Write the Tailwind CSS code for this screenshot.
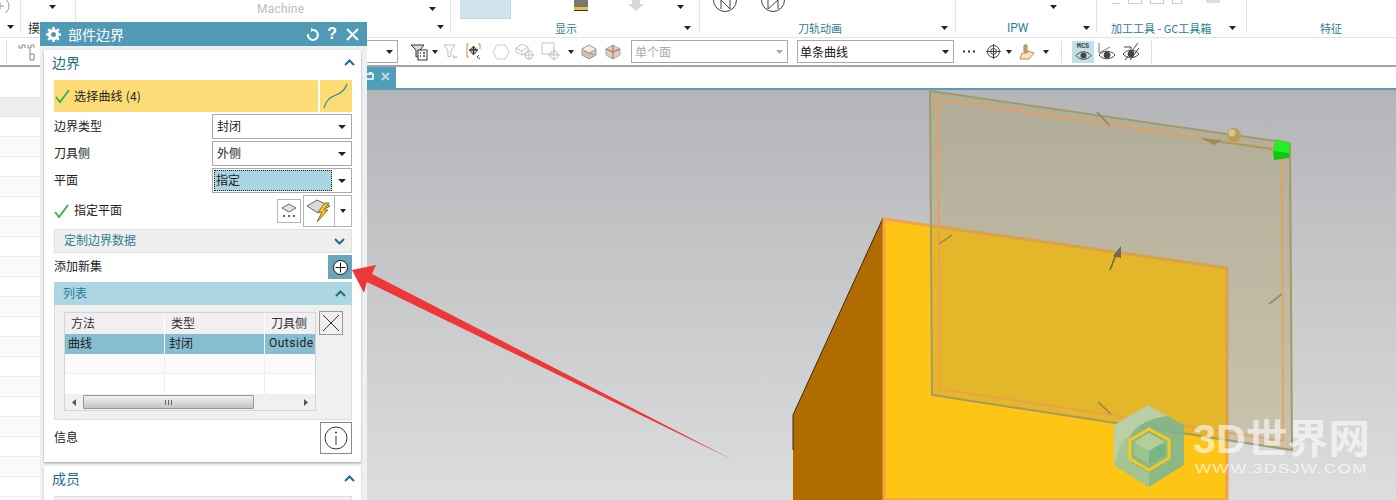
<!DOCTYPE html>
<html lang="zh-CN">
<head>
    <meta charset="UTF-8">
    <title>部件边界</title>
    <script src="https://cdn.jsdelivr.net/npm/@tailwindcss/browser@4"></script>
</head>
<body class="bg-white font-['Noto_Sans_CJK_SC','Noto_Sans',sans-serif] text-xs text-[#222]">
<div class="relative w-[1396px] h-[500px] overflow-hidden">

    <!-- ribbon -->
    <div class="flex h-[38px] border-b border-[#e3e3e3] text-[#2b7e96] text-[11px]">
        <div class="w-[21px] h-[32px] border-r border-[#e4e4e4] flex flex-col justify-between">
            <svg width="11" height="13" viewBox="0 0 11 13" fill="none" stroke="#999"><circle cx="0" cy="6" r="9"/><path d="M-3 6h7M0 2v8"/></svg>
            <svg class="ml-[7px] mb-[3px]" width="7" height="4"><path d="M0 0h7L3.5 4z" fill="#222"/></svg>
        </div>
        <div class="w-[55px] h-[32px] border-r border-[#e4e4e4] flex flex-col justify-between pl-[7px]">
            <svg class="ml-[21px] mt-[5px]" width="7" height="4"><path d="M0 0h7L3.5 4z" fill="#222"/></svg>
            <span class="text-[#333] text-xs leading-[18px] -mb-[5px]">摸</span>
        </div>
        <div class="w-[375px] h-[32px] border-r border-[#e4e4e4] flex flex-col justify-between">
            <div class="flex items-center h-[17px]">
                <span class="ml-[181px] text-[#bbb] text-xs font-['Roboto'] tracking-[0.2px]">Machine</span>
                <svg class="ml-[125px]" width="7" height="4"><path d="M0 0h7L3.5 4z" fill="#222"/></svg>
            </div>
            <svg class="ml-[361px] mb-[3px]" width="7" height="4"><path d="M0 0h7L3.5 4z" fill="#222"/></svg>
        </div>
        <div class="w-[249px] h-[32px] border-r border-[#e4e4e4] flex">
            <div class="flex flex-col">
                <div class="flex h-[19px] shrink-0 items-start">
                    <div class="ml-[9px] w-[51px] h-[19px] bg-[#cfe4ec] border-r border-b border-[#c0d8e2]"></div>
                    <svg class="ml-[63px]" width="14" height="11" viewBox="0 0 14 11"><rect width="14" height="7" fill="#777"/><rect y="7" width="14" height="3" fill="#e8c33a"/><rect y="10" width="14" height="1" fill="#333"/></svg>
                    <svg class="ml-[40px]" width="16" height="11" viewBox="0 0 16 11"><path d="M4 0h8v4h4L8 11 0 4h4z" fill="#d8d8d8"/></svg>
                    <svg class="ml-[33px] mt-[5px]" width="7" height="4"><path d="M0 0h7L3.5 4z" fill="#222"/></svg>
                </div>
                <div class="flex h-[18px] shrink-0 items-center">
                    <span class="ml-[104px]">显示</span>
                    <svg class="ml-[107px]" width="7" height="4"><path d="M0 0h7L3.5 4z" fill="#222"/></svg>
                </div>
            </div>
        </div>
        <div class="w-[256px] h-[32px] border-r border-[#e4e4e4] flex flex-col">
            <div class="flex h-[19px] shrink-0 items-start">
                <svg class="ml-[12px]" width="26" height="12" viewBox="0 0 26 12" fill="none" stroke="#444"><circle cx="13" cy="0" r="11.5"/><path d="M9 0v9M18 0v9L9 0"/></svg>
                <svg class="ml-[22px]" width="26" height="12" viewBox="0 0 26 12" fill="none" stroke="#444"><circle cx="13" cy="0" r="11.5"/><path d="M18 0v9M8 0v9L18 0"/></svg>
            </div>
            <div class="flex h-[18px] shrink-0 items-center">
                <span class="ml-[98px]">刀轨动画</span>
                <svg class="ml-[99px]" width="7" height="4"><path d="M0 0h7L3.5 4z" fill="#222"/></svg>
            </div>
        </div>
        <div class="w-[141px] h-[32px] border-r border-[#e4e4e4] flex flex-col">
            <svg class="ml-[94px] mt-[5px] shrink-0" width="7" height="4"><path d="M0 0h7L3.5 4z" fill="#222"/></svg>
            <div class="flex items-center mt-[10px] h-[18px] shrink-0">
                <span class="ml-[51px] text-xs font-['Roboto']">IPW</span>
                <svg class="ml-[55px]" width="7" height="4"><path d="M0 0h7L3.5 4z" fill="#222"/></svg>
            </div>
        </div>
        <div class="w-[150px] h-[32px] border-r border-[#e4e4e4] flex flex-col">
            <div class="h-[19px] shrink-0 flex gap-[8px] pl-[15px]">
                <div class="w-[8px] h-[4px] border-b border-[#ccc]"></div>
                <div class="w-[14px] h-[4px] border border-t-0 border-[#ccc]"></div>
                <div class="w-[14px] h-[4px] border border-t-0 border-[#ccc]"></div>
                <div class="w-[10px] h-[4px] border border-t-0 border-[#ccc]"></div>
                <div class="ml-[16px] w-[14px] h-[3px] bg-[#ddd]"></div>
            </div>
            <div class="flex items-center h-[18px] shrink-0">
                <span class="ml-[14px] whitespace-nowrap">加工工具 - GC工具箱</span>
                <svg class="ml-[18px]" width="7" height="4"><path d="M0 0h7L3.5 4z" fill="#222"/></svg>
            </div>
        </div>
        <div class="flex-1 h-[37px] flex items-end">
            <span class="ml-[73px] leading-[18px]">特征</span>
        </div>
    </div>

    <!-- toolbar -->
    <div class="flex items-center h-[29px] border-b-2 border-[#a3a3a3]">
        <div class="w-[7px] h-[22px] border-r border-[#ddd]"></div>
        <svg class="ml-[11px]" width="18" height="22" viewBox="0 0 18 22" fill="none" stroke="#888"><path d="M1 4v3h3V4h3v3M10 4v3h3V4h3v3M12 8v5h4v6h-4v-6"/></svg>
        <!-- filter select, mostly under the dialog -->
        <div class="ml-[15px] w-[347px] h-[23px] border border-[#a9a9a9] flex items-center justify-end pr-[4px]">
            <svg width="7" height="4"><path d="M0 0h7L3.5 4z" fill="#222"/></svg>
        </div>
        <svg class="ml-[12px]" width="18" height="18" viewBox="0 0 18 18" fill="none" stroke="#333"><path d="M1 2h13l-4 5v5l-4 2V7z" fill="#ddd"/><rect x="8" y="7" width="9" height="10" fill="#fff"/><path d="M10 10h1M13 10h2M10 13h1M13 13h2" stroke-width="1.5"/></svg>
        <svg class="ml-[4px]" width="6" height="4"><path d="M0 0h6L3 4z" fill="#222"/></svg>
        <svg class="ml-[5px]" width="16" height="16" viewBox="0 0 16 16" fill="none" stroke="#bbb"><path d="M1 1h11L8 7v5l-3 1V7zM11 11l-1 2 2 1M10 13h4v1"/></svg>
        <svg class="ml-[7px]" width="18" height="18" viewBox="0 0 18 18" fill="none"><path d="M3 1H1v13h2M12 1h2v5" stroke="#d08a3a"/><path d="M3 7h9M7.500 3v9" stroke="#333" stroke-width="1.500"/><circle cx="7.500" cy="7.500" r="3" stroke="#333"/><path d="M13 12l-2 2 3 2" stroke="#555"/></svg>
        <svg class="ml-[8px]" width="18" height="16" viewBox="0 0 18 16" fill="none" stroke="#ccc"><path d="M5 1h8l4 7-4 7H5L1 8z"/></svg>
        <svg class="ml-[5px]" width="20" height="18" viewBox="0 0 20 18" fill="none" stroke="#c4c4c4"><path d="M1 5l6-4 6 3v5l-6 3-6-3zM1 5l6 3 6-4M7 8v4"/><circle cx="14" cy="12" r="4"/><path d="M14 6v11M9 12h10"/></svg>
        <svg class="ml-[6px]" width="22" height="20" viewBox="0 0 22 20" fill="none" stroke="#c4c4c4"><path d="M1 1h12v11H1"/><path d="M1 1v11"/><circle cx="13" cy="13" r="4"/><path d="M13 7v12M7 13h12"/></svg>
        <svg class="ml-[5px]" width="6" height="4"><path d="M0 0h6L3 4z" fill="#222"/></svg>
        <svg class="ml-[7px]" width="16" height="16" viewBox="0 0 16 16"><path d="M8 1l7 4v6l-7 4-7-4V5z" fill="#c9c4bc" stroke="#999"/><path d="M1 5l7 4 7-4-7-4z" fill="#eee" stroke="#aaa"/><path d="M3 7l10 4" stroke="#e08a3a"/></svg>
        <svg class="ml-[8px]" width="16" height="16" viewBox="0 0 16 16"><path d="M8 1l7 4v6l-7 4-7-4V5z" fill="#d9cfc8" stroke="#aaa"/><path d="M8 1v14M1 5l7 3 7-3" stroke="#c2603a" fill="none"/></svg>
        <div class="ml-[10px] w-[157px] h-[23px] border border-[#a9a9a9] flex items-center justify-between pl-[3px] pr-[4px] text-[#aaa]">
            <span>单个面</span>
            <svg width="7" height="4"><path d="M0 0h7L3.5 4z" fill="#aaa"/></svg>
        </div>
        <div class="ml-[9px] w-[157px] h-[23px] border border-[#a9a9a9] flex items-center justify-between pl-[2px] pr-[4px] text-[#111]">
            <span>单条曲线</span>
            <svg width="7" height="4"><path d="M0 0h7L3.5 4z" fill="#222"/></svg>
        </div>
        <svg class="ml-[9px]" width="12" height="3"><path d="M0 1.500h2M5 1.500h2M10 1.500h2" stroke="#333" stroke-width="2"/></svg>
        <svg class="ml-[11px]" width="15" height="15" viewBox="0 0 15 15" fill="none" stroke="#444"><circle cx="7.500" cy="7.500" r="6"/><circle cx="7.500" cy="7.500" r="3"/><path d="M7.500 0v15M0 7.500h15"/></svg>
        <svg class="ml-[5px]" width="6" height="4"><path d="M0 0h6L3 4z" fill="#222"/></svg>
        <svg class="ml-[7px]" width="16" height="16" viewBox="0 0 16 16"><path d="M1 15l2-6h5l1-2 6 2-5 6z" fill="#f5e3c4" stroke="#c98a3a"/><path d="M5 1h3v7H5z" fill="#e8a33a" stroke="#888"/></svg>
        <svg class="ml-[8px]" width="6" height="4"><path d="M0 0h6L3 4z" fill="#222"/></svg>
        <div class="ml-[12px] w-px h-[22px] bg-[#ddd]"></div>
        <div class="ml-[10px] w-[22px] h-[22px] bg-[#c5dfe8] flex flex-col items-center text-[7px] leading-[8px] font-['Liberation_Mono'] font-bold text-[#345]">
            <span class="mt-[1px]">MCS</span>
            <svg width="17" height="11" viewBox="0 0 17 11"><path d="M1 5.500c4-5 11-5 15 0-4 5-11 5-15 0z" fill="none" stroke="#444"/><circle cx="8.500" cy="5.500" r="3" fill="#444"/></svg>
        </div>
        <svg class="ml-[3px]" width="19" height="20" viewBox="0 0 19 20" fill="none" stroke="#444"><path d="M2 1v10l11-6" stroke="#5e8f5e"/><path d="M2 13c4-5 12-5 16 0-4 5-12 5-16 0z"/><circle cx="10" cy="13" r="3" fill="#444"/></svg>
        <svg class="ml-[6px]" width="18" height="20" viewBox="0 0 18 20" fill="none" stroke="#444"><path d="M1 12c4-5 12-5 16 0-5 5-12 5-16 0z"/><circle cx="9" cy="12" r="3" fill="#444"/><path d="M2 5h7v4M16 1L3 18M17 6L8 18"/></svg>
        <div class="ml-[11px] w-px h-[22px] bg-[#ddd]"></div>
    </div>

    <!-- work area -->
    <div class="flex h-[433px]">
        <div class="w-[367px] flex flex-col pt-[30px]">
            <div class="h-[20px] bg-[#eeeeee] border-y border-[#e2e2e2]"></div>
            <div class="h-[20px] bg-white border-b border-[#ececec]"></div>
            <div class="h-[20px] bg-[#fafafa] border-b border-[#ececec]"></div>
            <div class="h-[20px] bg-white border-b border-[#ececec]"></div>
            <div class="h-[20px] bg-[#fafafa] border-b border-[#ececec]"></div>
            <div class="h-[20px] bg-white border-b border-[#ececec]"></div>
            <div class="h-[20px] bg-[#fafafa] border-b border-[#ececec]"></div>
            <div class="h-[20px] bg-white border-b border-[#ececec]"></div>
            <div class="h-[20px] bg-[#fafafa] border-b border-[#ececec]"></div>
            <div class="h-[20px] bg-white border-b border-[#ececec]"></div>
            <div class="h-[20px] bg-[#fafafa] border-b border-[#ececec]"></div>
            <div class="h-[20px] bg-white border-b border-[#ececec]"></div>
            <div class="h-[20px] bg-[#fafafa] border-b border-[#ececec]"></div>
            <div class="h-[20px] bg-white border-b border-[#ececec]"></div>
            <div class="h-[20px] bg-[#fafafa] border-b border-[#ececec]"></div>
            <div class="h-[20px] bg-white border-b border-[#ececec]"></div>
            <div class="h-[20px] bg-[#fafafa] border-b border-[#ececec]"></div>
            <div class="h-[20px] bg-white border-b border-[#ececec]"></div>
            <div class="h-[20px] bg-[#fafafa] border-b border-[#ececec]"></div>
            <div class="h-[20px] bg-white border-b border-[#ececec]"></div>
        </div>
        <div class="flex-1 flex flex-col">
            <div class="h-[23px] shrink-0 border-b-2 border-[#5b9bb5]">
                <div class="w-[29px] h-[21px] bg-[#4f9fbb] flex items-center pb-[2px]">
                    <svg width="7" height="9" viewBox="0 0 7 9" fill="none" stroke="#fff" stroke-width="1.500"><path d="M0 2h6v5H0M2 1l3-1"/></svg>
                    <svg class="ml-[7px]" width="9" height="9" viewBox="0 0 9 9" stroke="#c4d4da" stroke-width="2"><path d="M1 1l7 7M8 1L1 8"/></svg>
                </div>
            </div>
            <div class="flex-1 bg-linear-to-b from-[#b3b5b8] to-[#dcddde]"></div>
        </div>
    </div>

    <!-- 3d scene -->
    <svg class="absolute left-0 top-0" width="1396" height="500" viewBox="0 0 1396 500" fill="none">
        <path d="M883 218L793 415V500H883Z" fill="#b06c00"/>
        <path d="M883 218L793 415V450" stroke="#3a2a10" stroke-width="1"/>
        <path d="M884 219L1227 268V500H884Z" fill="#fec514" stroke="#f4a24a" stroke-width="3"/>
        <path d="M930 91L1290 143L1292 450L932 395Z" fill="rgb(172,155,85)" fill-opacity="0.33" stroke="#a49a63" stroke-width="2"/>
        <path d="M938 99L1282 150L1283 441L940 389Z" stroke="#ee9c55" stroke-opacity="0.85" stroke-width="2"/>
        <path d="M1097 112L1109 125M939 244L952 235M1098 402L1111 414M1269 304L1282 294" stroke="#8f8558" stroke-width="1.500"/>
        <path d="M1110 270L1117 252" stroke="#6b6440" stroke-width="1.500"/>
        <path d="M1121 246L1121 258L1113 256Z" fill="#6f6a4e"/>
        <path d="M1272 149L1208 140" stroke="#a89a60" stroke-width="2"/>
        <path d="M1200 138L1222 140L1214 145Z" fill="#a08b50"/>
        <circle cx="1234" cy="135" r="7" fill="#b89d5c"/>
        <circle cx="1232" cy="133" r="3.500" fill="#d8c48c"/>
        <path d="M1276 140L1290 143L1289 158L1274 160L1273 150Z" fill="#12c412"/>
        <path d="M1276 140L1290 143L1289 153L1273 151Z" fill="#25f025"/>
        <!-- watermark -->
        <path d="M1148 405L1184 425V465L1149 487L1114 465V425Z" fill="#79b596" fill-opacity="0.85"/>
        <path d="M1148 405L1168 416C1150 418 1135 425 1129 438L1114 465V425Z" fill="#c3d3ab" fill-opacity="0.85"/>
        <path d="M1114 465C1118 445 1124 436 1130 438V462L1149 473L1149 487Z" fill="#a6c695" fill-opacity="0.9"/>
        <path d="M1149 429L1169 440V458L1149 470L1130 459V440Z" stroke="#f8c724" stroke-width="3"/>
        <path d="M1149 433L1165 442L1149 451L1134 442Z" fill="#b6cd97"/>
        <path d="M1134 442L1149 451V464L1134 455Z" fill="#9cc48e"/>
        <path d="M1165 442L1149 451V464L1165 455Z" fill="#75b486"/>
        <text x="1193" y="453" textLength="177" lengthAdjust="spacingAndGlyphs" font-family="'Liberation Sans','Noto Sans CJK SC',sans-serif" font-size="40" font-weight="700" fill="#fff" fill-opacity="0.62">3D世界网</text>
        <text x="1195" y="473" textLength="173" lengthAdjust="spacingAndGlyphs" font-family="'Liberation Sans',sans-serif" font-size="12" letter-spacing="1" fill="#fff" fill-opacity="0.7">WWW.3DSJW.COM</text>
    </svg>

    <!-- dialog -->
    <div class="absolute left-[40px] top-[22px] w-[327px] h-[478px] bg-[#eef0f1] flex flex-col">
        <div class="h-[24px] shrink-0 bg-[#509ab6] text-white flex items-center pl-[6px] pr-[8px]">
            <svg width="15" height="15" viewBox="0 0 15 15" fill="none" stroke="#fff"><circle cx="7.500" cy="7.500" r="4" stroke-width="3"/><path d="M7.500 0v3M7.500 12v3M0 7.500h3M12 7.500h3M2.200 2.200l2 2M10.800 10.800l2 2M2.200 12.800l2-2M10.800 4.200l2-2" stroke-width="2.500"/></svg>
            <span class="ml-[7px] text-[14px]">部件边界</span>
            <svg class="ml-auto" width="13" height="13" viewBox="0 0 13 13" fill="none" stroke="#fff" stroke-width="2"><path d="M5 2a5 5 0 1 1-4 4"/><path d="M4 0l3 2-3 2z" fill="#fff" stroke="none"/></svg>
            <span class="ml-[7px] text-[16px] font-bold font-['Liberation_Sans'] leading-none">?</span>
            <svg class="ml-[9px]" width="13" height="13" viewBox="0 0 13 13" stroke="#fff" stroke-width="2"><path d="M1 1l11 11M12 1L1 12"/></svg>
        </div>

        <div class="mt-[4px] ml-[4px] w-[317px] h-[412px] shrink-0 bg-white shadow-[0_1px_2px_rgba(0,0,0,0.35)] pl-[10px] pr-[9px] flex flex-col">
            <div class="h-[30px] shrink-0 flex items-center justify-between pb-[6px]">
                <span class="-ml-[2px] text-[14px] text-[#1e6f88]">边界</span>
                <svg class="mr-[-3px]" width="11" height="7" viewBox="0 0 11 7" fill="none" stroke="#1e6f88" stroke-width="2"><path d="M1 6l4.500-4.500L10 6"/></svg>
            </div>
            <div class="flex h-[32px] shrink-0 gap-[2px]">
                <div class="w-[264px] bg-[#fddc75] flex items-center">
                    <svg class="ml-[1px]" width="15" height="14" viewBox="0 0 15 14" fill="none" stroke="#37b74c" stroke-width="2"><path d="M1 8l4 5L14 1"/></svg>
                    <span class="ml-[4px] text-[#222] tracking-[0.2px]">选择曲线 (4)</span>
                </div>
                <div class="w-[32px] bg-[#fddc75]">
                    <svg width="32" height="32" viewBox="0 0 32 32" fill="none" stroke="#2f8a96" stroke-width="1.200"><path d="M4 28c2-8 6-11 12-13 6-2 9-5 11-11"/></svg>
                </div>
            </div>
            <div class="mt-[2px] h-[25px] shrink-0 flex items-center justify-between">
                <span class="pb-[2px]">边界类型</span>
                <div class="w-[140px] h-[25px] border border-[#a9a9a9] flex items-center justify-between pl-[4px] pr-[5px]"><span class="pb-[2px]">封闭</span><svg width="8" height="4"><path d="M0 0h8L4 4z" fill="#222"/></svg></div>
            </div>
            <div class="mt-[2px] h-[25px] shrink-0 flex items-center justify-between">
                <span class="pb-[2px]">刀具侧</span>
                <div class="w-[140px] h-[25px] border border-[#a9a9a9] flex items-center justify-between pl-[4px] pr-[5px]"><span class="pb-[2px]">外侧</span><svg width="8" height="4"><path d="M0 0h8L4 4z" fill="#222"/></svg></div>
            </div>
            <div class="mt-[2px] h-[25px] shrink-0 flex items-center justify-between">
                <span class="pb-[2px]">平面</span>
                <div class="w-[140px] h-[25px] border border-[#a9a9a9] flex items-center justify-between pl-[1px] pr-[5px]">
                    <span class="w-[118px] h-[21px] bg-[#a9d5e3] outline-1 outline-dotted outline-[#222] -outline-offset-1 pl-[2px] leading-[20px]">指定</span>
                    <svg width="8" height="4"><path d="M0 0h8L4 4z" fill="#222"/></svg>
                </div>
            </div>
            <div class="mt-[2px] h-[32px] shrink-0 flex items-center">
                <svg width="15" height="14" viewBox="0 0 15 14" fill="none" stroke="#37b74c" stroke-width="2"><path d="M1 8l4 5L14 1"/></svg>
                <span class="ml-[5px] pb-[2px]">指定平面</span>
                <div class="ml-auto w-[24px] h-[24px] border border-[#b5b5b5] flex items-center justify-center">
                    <svg width="18" height="18" viewBox="0 0 18 18" fill="none"><path d="M9 2l7 4-7 4-7-4z" fill="#e3e3e3" stroke="#666"/><path d="M3 14h2M8 14h2M13 14h2" stroke="#333" stroke-width="1.500"/></svg>
                </div>
                <div class="ml-[2px] w-[32px] h-[32px] border border-[#b5b5b5] flex items-center justify-center">
                    <svg width="26" height="26" viewBox="0 0 26 26"><path d="M11 2l13 6-12 7L1 8z" fill="#d9d9d9" stroke="#666"/><path d="M19 5l-7 9h4l-5 10 11-12h-4l5-7z" fill="#f4c430" stroke="#8a6d1a"/></svg>
                </div>
                <div class="w-[17px] h-[32px] border border-l-0 border-[#b5b5b5] flex items-center justify-center">
                    <svg width="6" height="4"><path d="M0 0h6L3 4z" fill="#222"/></svg>
                </div>
            </div>
            <div class="mt-[2px] h-[24px] shrink-0 bg-[#efefef] border border-[#e0e0e0] flex items-center justify-between pl-[9px] pr-[6px] text-[#2b7e96]">
                <span class="pb-[2px]">定制边界数据</span>
                <svg width="11" height="7" viewBox="0 0 11 7" fill="none" stroke="#1e6f88" stroke-width="2"><path d="M1 1l4.500 4.500L10 1"/></svg>
            </div>
            <div class="mt-[2px] h-[24px] shrink-0 flex items-center justify-between">
                <span class="pb-[2px]">添加新集</span>
                <div class="w-[24px] h-[24px] bg-[#6ba5bc] flex items-center justify-center">
                    <svg width="15" height="15" viewBox="0 0 15 15" fill="#fff" stroke="#111"><circle cx="7.500" cy="7.500" r="7"/><path d="M7.500 2.500v10M2.500 7.500h10"/></svg>
                </div>
            </div>
            <div class="mt-[3px] h-[23px] shrink-0 bg-[#aed6e2] flex items-center justify-between pl-[9px] pr-[6px] text-[#2b7e96]">
                <span class="pb-[2px]">列表</span>
                <svg width="11" height="7" viewBox="0 0 11 7" fill="none" stroke="#1e6f88" stroke-width="2"><path d="M1 6l4.500-4.500L10 6"/></svg>
            </div>
            <div class="h-[115px] shrink-0 bg-[#f0f0f0] border border-t-0 border-[#dcdcdc] flex items-start pl-[9px] pt-[7px]">
                <div class="w-[252px] h-[99px] border border-[#d5d5d5] bg-white flex flex-col">
                    <div class="h-[21px] shrink-0 grid grid-cols-[100px_100px_1fr] bg-[#f0f0f0] text-[#333] leading-[20px]">
                        <span class="pl-[6px] border-r border-white">方法</span>
                        <span class="pl-[6px] border-r border-white">类型</span>
                        <span class="pl-[6px]">刀具侧</span>
                    </div>
                    <div class="h-[20px] shrink-0 grid grid-cols-[100px_100px_1fr] bg-[#86bdd1] leading-[18px] text-[#222]">
                        <span class="pl-[3px] border-r border-white">曲线</span>
                        <span class="pl-[4px] border-r border-white">封闭</span>
                        <span class="pl-[4px] font-['Roboto'] tracking-[0.5px]">Outside</span>
                    </div>
                    <div class="h-[20px] shrink-0 grid grid-cols-[100px_100px_1fr] bg-[#fafafa] border-b border-[#eee]">
                        <span class="border-r border-[#eee]"></span><span class="border-r border-[#eee]"></span><span></span>
                    </div>
                    <div class="h-[20px] shrink-0 grid grid-cols-[100px_100px_1fr] bg-white">
                        <span class="border-r border-[#eee]"></span><span class="border-r border-[#eee]"></span><span></span>
                    </div>
                    <div class="flex-1 flex items-center bg-[#f0f0f0]">
                        <svg class="ml-[7px]" width="4" height="7"><path d="M4 0v7L0 3.500z" fill="#555"/></svg>
                        <div class="ml-[7px] w-[171px] h-[14px] border border-[#999] rounded-[1px] bg-linear-to-b from-[#f2f2f2] to-[#c4c4c4] flex items-center justify-center">
                            <div class="w-[7px] h-[5px] border-x border-[#666] flex justify-center"><div class="w-px h-[5px] bg-[#666]"></div></div>
                        </div>
                        <svg class="ml-[50px]" width="4" height="7"><path d="M0 0v7L4 3.500z" fill="#555"/></svg>
                    </div>
                </div>
                <div class="ml-[3px] -mt-[1px] w-[24px] h-[24px] border border-[#9a9a9a] flex items-center justify-center">
                    <svg width="18" height="18" viewBox="0 0 18 18" stroke="#333"><path d="M1 1l16 16M17 1L1 17"/></svg>
                </div>
            </div>
            <div class="mt-[2px] h-[32px] shrink-0 flex items-center justify-between">
                <span class="pb-[2px]">信息</span>
                <div class="w-[32px] h-[32px] border border-[#8a8a8a] flex items-center justify-center">
                    <svg width="24" height="24" viewBox="0 0 24 24" fill="none" stroke="#333"><circle cx="12" cy="12" r="11"/><path d="M12 10v9"/><circle cx="12" cy="6.500" r="0.600" fill="#333"/></svg>
                </div>
            </div>
        </div>

        <div class="mt-[4px] ml-[4px] w-[317px] flex-1 bg-white shadow-[0_1px_2px_rgba(0,0,0,0.2)] pl-[10px] pr-[9px] flex flex-col">
            <div class="h-[30px] shrink-0 flex items-center justify-between pb-[6px]">
                <span class="-ml-[2px] text-[14px] text-[#1e6f88]">成员</span>
                <svg class="mr-[-3px]" width="11" height="7" viewBox="0 0 11 7" fill="none" stroke="#1e6f88" stroke-width="2"><path d="M1 6l4.500-4.500L10 6"/></svg>
            </div>
            <div class="h-[8px] bg-[#f0f0f0] border border-[#dcdcdc]"></div>
        </div>
    </div>

    <!-- red callout arrow over the dialog edge -->
    <svg class="absolute left-0 top-0" width="1396" height="500" viewBox="0 0 1396 500">
        <path d="M352 270L376 265L372 274L733 460L367 282L364 293Z" fill="#ee3737"/>
    </svg>
</div>
</body>
</html>
